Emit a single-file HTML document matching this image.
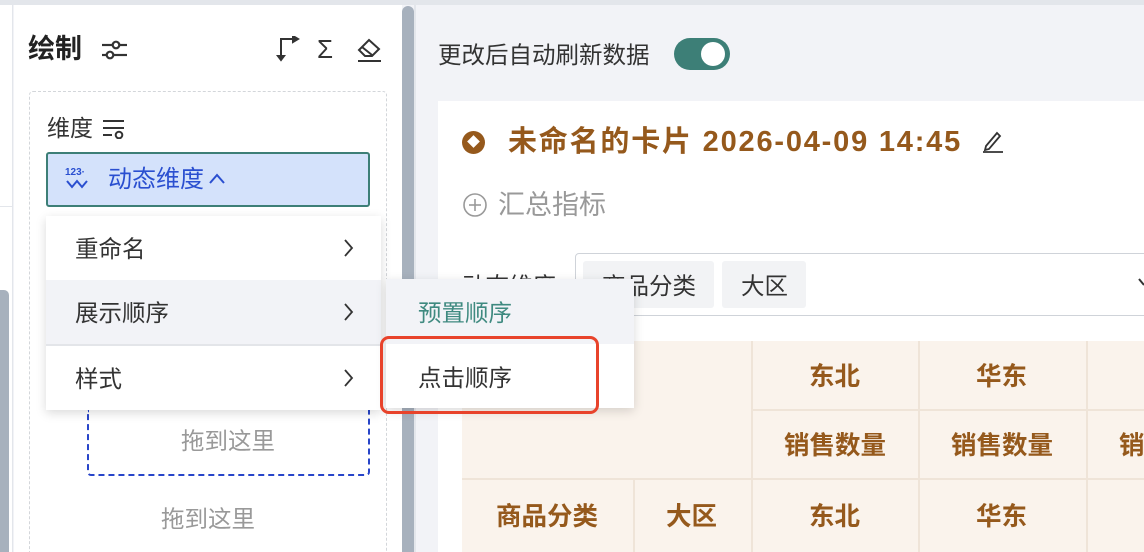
<!DOCTYPE html>
<html><head><meta charset="utf-8"><style>
*{box-sizing:border-box;margin:0;padding:0}
html,body{width:1144px;height:552px;overflow:hidden}
body{position:relative;background:#f2f3f7;font-family:"Liberation Sans","Noto Sans CJK SC",sans-serif;color:#333}
.a{position:absolute}
.t{position:absolute;white-space:nowrap;line-height:1.2}
</style></head><body>
<div class="a" style="left:0;top:0;width:1144px;height:5px;background:#e3e6eb"></div>
<div class="a" style="left:0;top:5px;width:13px;height:547px;background:#fff;border-right:1px solid #e3e6eb"></div>
<div class="a" style="left:0;top:206px;width:13px;height:1px;background:#e3e6eb"></div>
<div class="a" style="left:0;top:290px;width:9px;height:262px;background:#a7b1bd;border-radius:0 5px 0 0"></div>
<div class="a" style="left:14px;top:5px;width:388px;height:547px;background:#fff"></div>
<div class="a" style="left:402px;top:6px;width:12px;height:546px;background:#a7b1bd;border-radius:6px 6px 0 0"></div>
<div class="a" style="left:414px;top:5px;width:2px;height:547px;background:#e3e6eb"></div>

<div class="t" style="left:28px;top:33px;font-size:27px;font-weight:bold;color:#222">绘制</div>
<svg class="a" style="left:100px;top:38px" width="28" height="24" viewBox="0 0 28 24" fill="none" stroke="#333" stroke-width="2.2"><line x1="2" y1="7" x2="12" y2="7"/><circle cx="16" cy="7" r="3.3"/><line x1="19" y1="7" x2="27" y2="7"/><line x1="2" y1="17" x2="6" y2="17"/><circle cx="10" cy="17" r="3.3"/><line x1="13" y1="17" x2="27" y2="17"/></svg>
<svg class="a" style="left:276px;top:36px" width="26" height="26" viewBox="0 0 26 26" fill="none" stroke="#333" stroke-width="2"><path d="M5 24V3h16"/><path d="M17 0l5 3-5 3z" fill="#333"/><path d="M2 20l3 4 3-4z" fill="#333"/></svg>
<div class="t" style="left:317px;top:34px;font-size:26px;color:#333">Σ</div>
<svg class="a" style="left:355px;top:37px" width="28" height="26" viewBox="0 0 28 26" fill="none" stroke="#333" stroke-width="2"><path d="M14 3l10 9-7 7H10l-6-6z"/><path d="M7 10l10 8"/><line x1="3" y1="24" x2="26" y2="24"/></svg>

<div class="a" style="left:29px;top:91px;width:358px;height:480px;border:1.5px dashed #d3d6da;border-radius:4px"></div>
<div class="t" style="left:47px;top:115px;font-size:23px;color:#333">维度</div>
<svg class="a" style="left:102px;top:117px" width="24" height="22" viewBox="0 0 24 22" fill="none" stroke="#333" stroke-width="2"><line x1="1" y1="4" x2="22" y2="4"/><line x1="1" y1="11" x2="22" y2="11"/><line x1="1" y1="18" x2="10" y2="18"/><circle cx="17" cy="18" r="3.3"/></svg>
<div class="a" style="left:46px;top:152px;width:324px;height:55px;background:#d4e2fb;border:2px solid #3d7f77;border-radius:3px"></div>
<div class="t" style="left:65px;top:167px;font-size:10px;font-weight:bold;color:#2a4fd0">123·</div>
<svg class="a" style="left:66px;top:179px" width="26" height="10" viewBox="0 0 26 10" fill="none" stroke="#2a4fd0" stroke-width="2"><path d="M1 2l5 6 5-6 5 6 5-6"/></svg>
<div class="t" style="left:108px;top:166px;font-size:24px;color:#2a4fd0">动态维度</div>
<svg class="a" style="left:208px;top:172px" width="18" height="14" viewBox="0 0 18 14" fill="none" stroke="#2a4fd0" stroke-width="2"><path d="M2 11l7-8 7 8"/></svg>

<div class="a" style="left:87px;top:410px;width:283px;height:66px;border:2px dashed #2845c9;border-top:none;border-radius:0 0 4px 4px"></div>
<div class="t" style="left:181px;top:427px;font-size:23.5px;color:#999">拖到这里</div>
<div class="t" style="left:161px;top:505px;font-size:23.5px;color:#999">拖到这里</div>

<div class="a" style="left:46px;top:216px;width:335px;height:194px;background:#fff;box-shadow:0 3px 10px rgba(0,0,0,.15)"></div>
<div class="t" style="left:75px;top:235px;font-size:23.5px;color:#333">重命名</div>
<div class="a" style="left:46px;top:280px;width:335px;height:64px;background:#f2f3f7"></div>
<div class="a" style="left:46px;top:344px;width:335px;height:2px;background:#e3e5e9"></div>
<div class="t" style="left:75px;top:299px;font-size:23.5px;color:#333">展示顺序</div>
<div class="t" style="left:75px;top:365px;font-size:23.5px;color:#333">样式</div>
<svg class="a" style="left:343px;top:238px" width="12" height="20" viewBox="0 0 12 20" fill="none" stroke="#333" stroke-width="1.8"><path d="M2 2l7 8-7 8"/></svg>
<svg class="a" style="left:343px;top:302px" width="12" height="20" viewBox="0 0 12 20" fill="none" stroke="#333" stroke-width="1.8"><path d="M2 2l7 8-7 8"/></svg>
<svg class="a" style="left:343px;top:368px" width="12" height="20" viewBox="0 0 12 20" fill="none" stroke="#333" stroke-width="1.8"><path d="M2 2l7 8-7 8"/></svg>

<div class="t" style="left:438px;top:41px;font-size:23.5px;color:#333">更改后自动刷新数据</div>
<div class="a" style="left:674px;top:38px;width:56px;height:32px;background:#3d7f77;border-radius:16px"></div>
<div class="a" style="left:701px;top:42px;width:24px;height:24px;background:#fff;border-radius:50%"></div>

<div class="a" style="left:438px;top:101px;width:706px;height:451px;background:#fff"></div>
<div class="a" style="left:462px;top:131px;width:23px;height:23px;background:#95591c;border-radius:50%"></div>
<div class="a" style="left:469px;top:137px;width:9px;height:9px;background:#fff;transform:rotate(45deg)"></div>
<div class="t" style="left:508px;top:125px;font-size:29px;font-weight:bold;color:#95591c;letter-spacing:1.8px">未命名的卡片 2026-04-09 14:45</div>
<svg class="a" style="left:980px;top:128px" width="26" height="26" viewBox="0 0 26 26" fill="none" stroke="#333" stroke-width="1.8"><path d="M6 18l11-13 3 3-11 13-4 1z"/><line x1="3" y1="24" x2="23" y2="24"/></svg>
<svg class="a" style="left:462px;top:192px" width="26" height="26" viewBox="0 0 26 26" fill="none" stroke="#999" stroke-width="1.6"><circle cx="13" cy="13" r="11"/><line x1="7" y1="13" x2="19" y2="13"/><line x1="13" y1="7" x2="13" y2="19"/></svg>
<div class="t" style="left:498px;top:189px;font-size:27px;color:#999">汇总指标</div>

<div class="t" style="left:462px;top:272px;font-size:23.5px;color:#333">动态维度</div>
<div class="a" style="left:575px;top:253px;width:580px;height:63px;border:1.5px solid #cfd3d9;border-radius:4px;background:#fff"></div>
<div class="a" style="left:583px;top:261px;width:131px;height:47px;background:#f2f3f5;border-radius:3px"></div>
<div class="t" style="left:602px;top:272px;font-size:23.5px;color:#333">商品分类</div>
<div class="a" style="left:722px;top:261px;width:84px;height:47px;background:#f2f3f5;border-radius:3px"></div>
<div class="t" style="left:741px;top:272px;font-size:23.5px;color:#333">大区</div>
<svg class="a" style="left:1138px;top:278px" width="8" height="10" viewBox="0 0 8 10" fill="none" stroke="#333" stroke-width="2"><path d="M1 1l5 6"/></svg>

<div class="a" style="left:462px;top:341px;width:682px;height:211px;background:#faf3ec;overflow:hidden">
 <div class="a" style="left:289px;top:0;width:2px;height:220px;background:#efe4d8"></div>
 <div class="a" style="left:456px;top:0;width:2px;height:220px;background:#efe4d8"></div>
 <div class="a" style="left:624px;top:0;width:2px;height:220px;background:#efe4d8"></div>
 <div class="a" style="left:171px;top:138px;width:2px;height:80px;background:#efe4d8"></div>
 <div class="a" style="left:289px;top:68px;width:400px;height:2px;background:#efe4d8"></div>
 <div class="a" style="left:0;top:137px;width:690px;height:2px;background:#efe4d8"></div>
</div>
<div style="font-weight:bold;color:#95591c;font-size:25.5px">
<div class="t" style="left:809px;top:362px">东北</div>
<div class="t" style="left:976px;top:362px">华东</div>
<div class="t" style="left:784px;top:431px">销售数量</div>
<div class="t" style="left:951px;top:431px">销售数量</div>
<div class="t" style="left:1119px;top:431px">销</div>
<div class="t" style="left:496px;top:502px">商品分类</div>
<div class="t" style="left:666px;top:502px">大区</div>
<div class="t" style="left:809px;top:502px">东北</div>
<div class="t" style="left:976px;top:502px">华东</div>
</div>

<div class="a" style="left:386px;top:279px;width:248px;height:129px;background:#fff;box-shadow:0 3px 10px rgba(0,0,0,.15)"></div>
<div class="a" style="left:386px;top:279px;width:248px;height:65px;background:#f2f3f7"></div>
<div class="t" style="left:418px;top:299px;font-size:23.5px;color:#3f8a80">预置顺序</div>
<div class="t" style="left:418px;top:364px;font-size:23.5px;color:#333">点击顺序</div>
<div class="a" style="left:380px;top:336px;width:219px;height:78px;border:3.5px solid #e8432b;border-radius:9px"></div>
</body></html>
